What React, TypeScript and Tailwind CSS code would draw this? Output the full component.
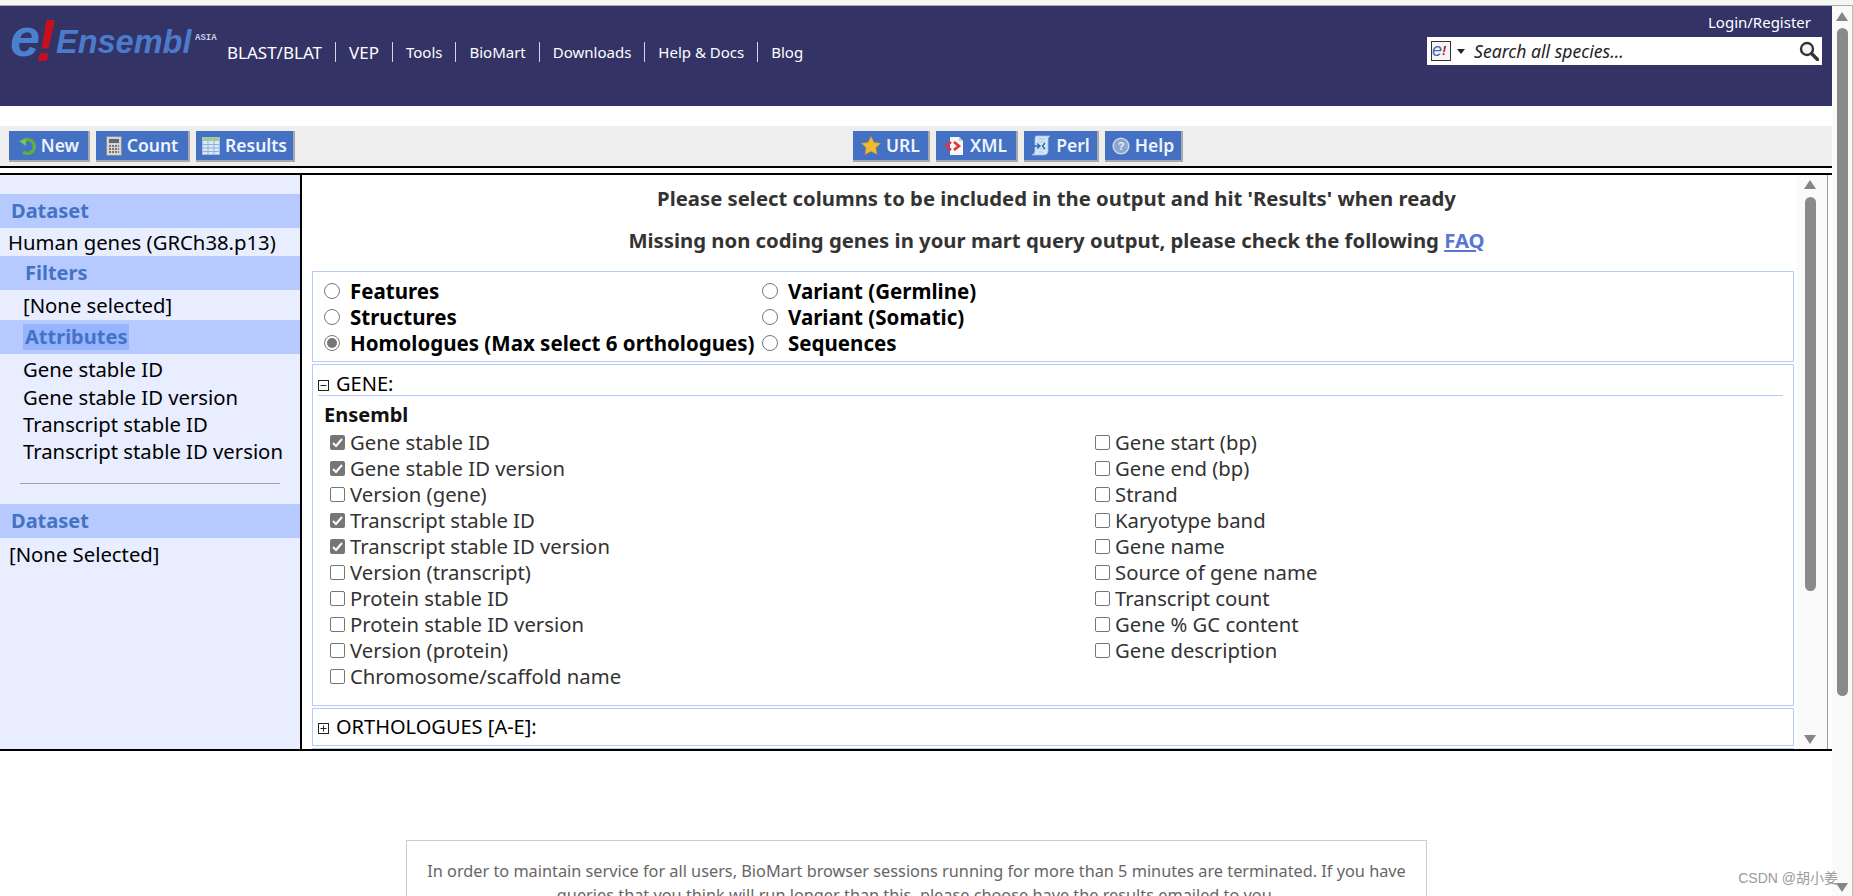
import React from "react";

const NAV = [
  { label: "BLAST/BLAT", size: "text-[17px]" },
  { label: "VEP", size: "text-[17px]" },
  { label: "Tools", size: "text-[15px]" },
  { label: "BioMart", size: "text-[15px]" },
  { label: "Downloads", size: "text-[15px]" },
  { label: "Help & Docs", size: "text-[15px]" },
  { label: "Blog", size: "text-[15px]" },
];

const LEFT_COLUMNS = [
  { label: "Gene stable ID", checked: true },
  { label: "Gene stable ID version", checked: true },
  { label: "Version (gene)" },
  { label: "Transcript stable ID", checked: true },
  { label: "Transcript stable ID version", checked: true },
  { label: "Version (transcript)" },
  { label: "Protein stable ID" },
  { label: "Protein stable ID version" },
  { label: "Version (protein)" },
  { label: "Chromosome/scaffold name" },
];

const RIGHT_COLUMNS = [
  "Gene start (bp)",
  "Gene end (bp)",
  "Strand",
  "Karyotype band",
  "Gene name",
  "Source of gene name",
  "Transcript count",
  "Gene % GC content",
  "Gene description",
];

function Logo() {
  return (
    <svg width="222" height="54" viewBox="0 0 222 54" className="shrink-0">
      <text x="10" y="48" fontFamily="Liberation Sans" fontStyle="italic" fontWeight="700" fontSize="54" fill="#4a80cf">e</text>
      <text x="36" y="53" fontFamily="Liberation Sans" fontStyle="italic" fontWeight="700" fontSize="60" fill="#c8101c">!</text>
      <text x="56" y="45" fontFamily="Liberation Sans" fontStyle="italic" fontWeight="700" fontSize="32.5" fill="#4a7ccb">Ensembl</text>
      <text x="195" y="32" fontFamily="Liberation Mono" fontWeight="700" fontSize="9" fill="#c8cce0">ASIA</text>
    </svg>
  );
}

function NewIcon() {
  return (
    <svg width="18" height="18" viewBox="0 0 18 18">
      <path d="M4 5 A7 7 0 1 1 5 15" fill="none" stroke="#5fae45" strokeWidth="3.4" />
      <path d="M1 4 L8 2 L8 9 Z" fill="#7cc35e" />
    </svg>
  );
}

function CountIcon() {
  return (
    <svg width="16" height="20" viewBox="0 0 16 20">
      <rect x="0.5" y="0.5" width="15" height="19" rx="1" fill="#d5d5d5" stroke="#8c8c8c" />
      <rect x="3" y="3" width="10" height="4" fill="#5a6a7a" />
      <path d="M3 10h10M3 13h10M3 16h10" stroke="#777" strokeWidth="2" strokeDasharray="2 1" />
    </svg>
  );
}

function TableIcon() {
  return (
    <svg width="18" height="18" viewBox="0 0 18 18">
      <rect x="0.5" y="0.5" width="17" height="17" fill="#dce8f8" stroke="#a8bdd8" />
      <rect x="1" y="1" width="16" height="3" fill="#9ccf8a" />
      <path d="M1 7.5h16M1 11h16M1 14.5h16M6 4v13M12 4v13" stroke="#8fb0dc" />
    </svg>
  );
}

function StarIcon() {
  return (
    <svg width="20" height="19" viewBox="0 0 20 19">
      <path d="M10 0.5 L13 6.5 L19.5 7.3 L14.8 11.8 L16 18.5 L10 15.2 L4 18.5 L5.2 11.8 L0.5 7.3 L7 6.5 Z" fill="#f0bb2c" stroke="#c9962a" strokeWidth="0.5" />
    </svg>
  );
}

function XmlIcon() {
  return (
    <svg width="20" height="20" viewBox="0 0 20 20">
      <path d="M5 1 H14 L18 5 V19 H5 Z" fill="#f6f6f6" />
      <path d="M14 1 V5 H18 Z" fill="#c8c8c8" />
      <path d="M6 6 L1 10 L6 14 M9 6 L14 10 L9 14" fill="none" stroke="#dc3535" strokeWidth="2.6" />
    </svg>
  );
}

function PerlIcon() {
  return (
    <svg width="20" height="21" viewBox="0 0 20 21">
      <path d="M5 1 H19 Q17 2 17 4 V16 Q17 20 13 20 H1 Q4 19 4 16 V4 Q4 2 5 1 Z" fill="#d6e6f8" stroke="#9fc0e6" strokeWidth="0.8" />
      <path d="M7 4h7M7 7h7M7 14h7M7 17h5" stroke="#a8c6ea" />
      <path d="M2 11 H8 M6 8.5 L9 11 L6 13.5 M14 8 L11.5 11 L14 14" fill="none" stroke="#2c67b0" strokeWidth="1.4" />
    </svg>
  );
}

function HelpIcon() {
  return (
    <svg width="18" height="18" viewBox="0 0 18 18">
      <circle cx="9" cy="9" r="7.8" fill="#8ba6cf" stroke="#c9d2e2" strokeWidth="1.6" />
      <text x="9" y="13" textAnchor="middle" fontFamily="Liberation Sans" fontWeight="700" fontSize="11" fill="#e8edf5">?</text>
    </svg>
  );
}

function ToolButton({ label, icon, width }: { label: string; icon: React.ReactNode; width: string }) {
  return (
    <div className={`flex h-[31px] items-center justify-center gap-[5px] border-r-2 border-b-2 border-[#a9a9a9] bg-[#4471c3] text-[17.5px] font-semibold text-[#eef3ff] ${width}`}>
      {icon}
      <span>{label}</span>
    </div>
  );
}

function SideHeader({ children, indent }: { children: React.ReactNode; indent?: boolean }) {
  return (
    <div className={`flex h-[34px] items-center bg-[#b7caff] text-[20px] font-bold text-[#4472c4] ${indent ? "pl-[25px]" : "pl-[11px]"}`}>
      {children}
    </div>
  );
}

function CheckRow({ label, checked }: { label: string; checked?: boolean }) {
  return (
    <div className="flex h-[26px] items-center text-[20.3px] text-[#333]">
      {checked ? (
        <svg width="15" height="15" viewBox="0 0 15 15" className="mr-[5px] shrink-0">
          <rect width="15" height="15" rx="2" fill="#767676" />
          <path d="M3 8 L6 11 L12 4" fill="none" stroke="#fff" strokeWidth="2" />
        </svg>
      ) : (
        <span className="mr-[5px] h-[15px] w-[15px] shrink-0 rounded-[2px] border border-[#767676] bg-white" />
      )}
      <span>{label}</span>
    </div>
  );
}

function RadioRow({ label, checked }: { label: string; checked?: boolean }) {
  return (
    <div className="flex h-[26px] items-center text-[20.5px] font-bold text-black">
      <span className="mr-[10px] flex h-[16px] w-[16px] shrink-0 items-center justify-center rounded-full border border-[#767676] bg-white">
        {checked && <span className="h-[10px] w-[10px] rounded-full bg-[#767676]" />}
      </span>
      <span className="whitespace-nowrap">{label}</span>
    </div>
  );
}

function TreeBox({ open }: { open?: boolean }) {
  return (
    <svg width="11" height="11" viewBox="0 0 11 11" className="mr-[7px] mt-[3px] shrink-0">
      <rect x="0.5" y="0.5" width="10" height="10" fill="#fff" stroke="#222" />
      <path d={open ? "M2.5 5.5h6" : "M2.5 5.5h6M5.5 2.5v6"} stroke="#222" />
    </svg>
  );
}

function ScrollArrow({ up }: { up?: boolean }) {
  return (
    <svg width="12" height="9" viewBox="0 0 12 9">
      <path d={up ? "M6 0 L12 9 L0 9 Z" : "M0 0 L12 0 L6 9 Z"} fill="#858585" />
    </svg>
  );
}

export default function App() {
  return (
    <div className="relative h-[896px] w-[1853px] overflow-hidden bg-white font-['Noto_Sans',sans-serif]">
      <div className="h-[6px] border-b border-[#aaa] bg-[#f6f6f6]" />

      <div className="flex">
        <div className="w-[1832px]">
          {/* Masthead */}
          <div className="flex h-[100px] justify-between bg-[#333366]">
            <div className="flex items-start">
              <div className="mt-[2px] w-[214px]">
                <Logo />
              </div>
              <div className="mt-[36px] flex h-[20px] items-center text-white">
                {NAV.map((n, i) => (
                  <span key={n.label} className={`flex h-[20px] items-center whitespace-nowrap px-[13px] leading-none ${n.size} ${i < NAV.length - 1 ? "border-r border-[#d5d5e5]" : ""}`}>
                    {n.label}
                  </span>
                ))}
              </div>
            </div>
            <div className="mr-[10px] flex w-[395px] flex-col">
              <div className="mt-[6px] h-[25px] pr-[11px] text-right text-[15px] leading-[20px] text-white">Login/Register</div>
              <div className="flex h-[28px] items-center bg-white pl-[4px] pr-[3px]">
                <svg width="20" height="20" viewBox="0 0 20 20" className="shrink-0">
                  <rect x="0.5" y="0.5" width="19" height="19" fill="#f4f4f4" stroke="#333" />
                  <text x="1" y="15" fontFamily="Liberation Sans" fontStyle="italic" fontSize="18" fill="#3e64c8">e</text>
                  <text x="11" y="14" fontFamily="Liberation Sans" fontWeight="700" fontStyle="italic" fontSize="13" fill="#c8101c">!</text>
                </svg>
                <svg width="8" height="5" viewBox="0 0 8 5" className="ml-[6px] shrink-0">
                  <path d="M0 0 H8 L4 5 Z" fill="#222" />
                </svg>
                <span className="ml-[9px] flex-1 text-[17.6px] italic text-[#222]">Search all species...</span>
                <svg width="20" height="20" viewBox="0 0 20 20" className="shrink-0">
                  <circle cx="8" cy="8" r="6" fill="#f4f4f4" stroke="#333" strokeWidth="2.4" />
                  <path d="M12.5 12.5 L18.5 18.5" stroke="#333" strokeWidth="3.4" strokeLinecap="round" />
                </svg>
              </div>
            </div>
          </div>

          <div className="h-[20px]" />

          {/* Mart toolbar */}
          <div className="flex h-[40px] items-start bg-[#eeeeee] pt-[5px]">
            <div className="ml-[9px] flex gap-[6px]">
              <ToolButton label="New" width="w-[81px]" icon={<NewIcon />} />
              <ToolButton label="Count" width="w-[94px]" icon={<CountIcon />} />
              <ToolButton label="Results" width="w-[99px]" icon={<TableIcon />} />
            </div>
            <div className="ml-[558px] flex gap-[6px]">
              <ToolButton label="URL" width="w-[77px]" icon={<StarIcon />} />
              <ToolButton label="XML" width="w-[82px]" icon={<XmlIcon />} />
              <ToolButton label="Perl" width="w-[75px]" icon={<PerlIcon />} />
              <ToolButton label="Help" width="w-[78px]" icon={<HelpIcon />} />
            </div>
          </div>
          <div className="h-[2px] bg-black" />
          <div className="h-[5px]" />

          {/* Main panel */}
          <div className="flex h-[578px] overflow-hidden border-y-2 border-black">
            <div className="w-[302px] shrink-0 border-r-2 border-black bg-[#e8edff] pt-[19px] text-[20.3px] text-black">
              <SideHeader>Dataset</SideHeader>
              <div className="flex h-[28px] items-center whitespace-nowrap pl-[8px]">Human genes (GRCh38.p13)</div>
              <SideHeader indent>Filters</SideHeader>
              <div className="flex h-[30px] items-center pl-[23px]">[None selected]</div>
              <SideHeader indent>
                <span className="-ml-[2px] bg-[#97b4ff] px-[2px] leading-[26px]">Attributes</span>
              </SideHeader>
              <div className="pl-[23px] pt-[2px]">
                <div className="flex h-[27px] items-center">Gene stable ID</div>
                <div className="flex h-[28px] items-center">Gene stable ID version</div>
                <div className="flex h-[27px] items-center">Transcript stable ID</div>
                <div className="flex h-[27px] items-center whitespace-nowrap">Transcript stable ID version</div>
              </div>
              <div className="mx-[20px] mt-[18px] h-px bg-[#a0a0a0]" />
              <div className="h-[20px]" />
              <SideHeader>Dataset</SideHeader>
              <div className="flex h-[32px] items-center pl-[9px]">[None Selected]</div>
            </div>

            <div className="flex min-w-0 flex-1">
              <div className="w-[1494px] shrink-0 pl-[10px] pr-[2px]">
                <div className="flex h-[96px] flex-col items-center pl-[7px] pt-[5px] text-[20.3px] font-bold text-[#333]">
                  <div className="flex h-[36px] items-center whitespace-nowrap">Please select columns to be included in the output and hit 'Results' when ready</div>
                  <div className="flex h-[48px] items-center whitespace-nowrap">
                    Missing non coding genes in your mart query output, please check the following&nbsp;
                    <span className="text-[#5b76d0] underline">FAQ</span>
                  </div>
                </div>

                <div className="flex h-[91px] items-start border border-[#b7caff] pl-[11px] pt-[6px]">
                  <div className="w-[438px]">
                    <RadioRow label="Features" />
                    <RadioRow label="Structures" />
                    <RadioRow label="Homologues (Max select 6 orthologues)" checked />
                  </div>
                  <div>
                    <RadioRow label="Variant (Germline)" />
                    <RadioRow label="Variant (Somatic)" />
                    <RadioRow label="Sequences" />
                  </div>
                </div>

                <div className="mt-[2px] h-[342px] border border-[#b7caff] pl-[5px] pr-[10px] pt-[4px]">
                  <div className="flex h-[27px] items-center border-b border-[#b7caff] pt-[3px] text-[20px] text-black">
                    <TreeBox open />
                    GENE:
                  </div>
                  <div className="flex h-[33px] items-center pl-[6px] pt-[5px] text-[20px] font-bold text-[#111]">Ensembl</div>
                  <div className="flex pl-[12px]">
                    <div className="w-[765px]">
                      {LEFT_COLUMNS.map((c) => (
                        <CheckRow key={c.label} label={c.label} checked={c.checked} />
                      ))}
                    </div>
                    <div>
                      {RIGHT_COLUMNS.map((c) => (
                        <CheckRow key={c} label={c} />
                      ))}
                    </div>
                  </div>
                </div>

                <div className="mt-[2px] flex h-[38px] items-center border border-[#b7caff] pl-[5px] text-[20px] text-black">
                  <TreeBox />
                  ORTHOLOGUES [A-E]:
                </div>
                <div className="mt-[2px] h-[4px] border-t border-[#b7caff]" />
              </div>

              {/* Inner scrollbar */}
              <div className="flex w-[32px] flex-col items-center justify-between border-r border-[#999] bg-[#fafafa] pb-[5px] pt-[5px] pr-[3px]">
                <div className="flex flex-col items-center">
                  <ScrollArrow up />
                  <div className="mt-[8px] h-[394px] w-[11px] rounded-full bg-[#8a8a8a]" />
                </div>
                <ScrollArrow />
              </div>
            </div>
          </div>

          <div className="mx-[406px] mb-0 mt-[89px] w-[1021px] border border-[#ccc] px-[12px] pt-[18px] text-center text-[16.3px] leading-[24px] text-[#666]">
            In order to maintain service for all users, BioMart browser sessions running for more than 5 minutes are terminated. If you have queries that you think will run longer than this, please choose have the results emailed to you.
          </div>
        </div>

        {/* Page scrollbar */}
        <div className="flex h-[890px] w-[21px] flex-col items-center border-r border-[#bbb] bg-[#fafafa] pt-[6px]">
          <ScrollArrow up />
          <div className="mt-[7px] h-[668px] w-[11px] rounded-full bg-[#8a8a8a]" />
          <div className="mt-auto mb-[4px]">
            <ScrollArrow />
          </div>
        </div>
      </div>

      <div className="absolute right-[15px] top-[868px] font-['Liberation_Sans','Noto_Sans_CJK_SC',sans-serif] text-[14px] text-[#9a9a9a]">CSDN @胡小姜</div>
    </div>
  );
}
